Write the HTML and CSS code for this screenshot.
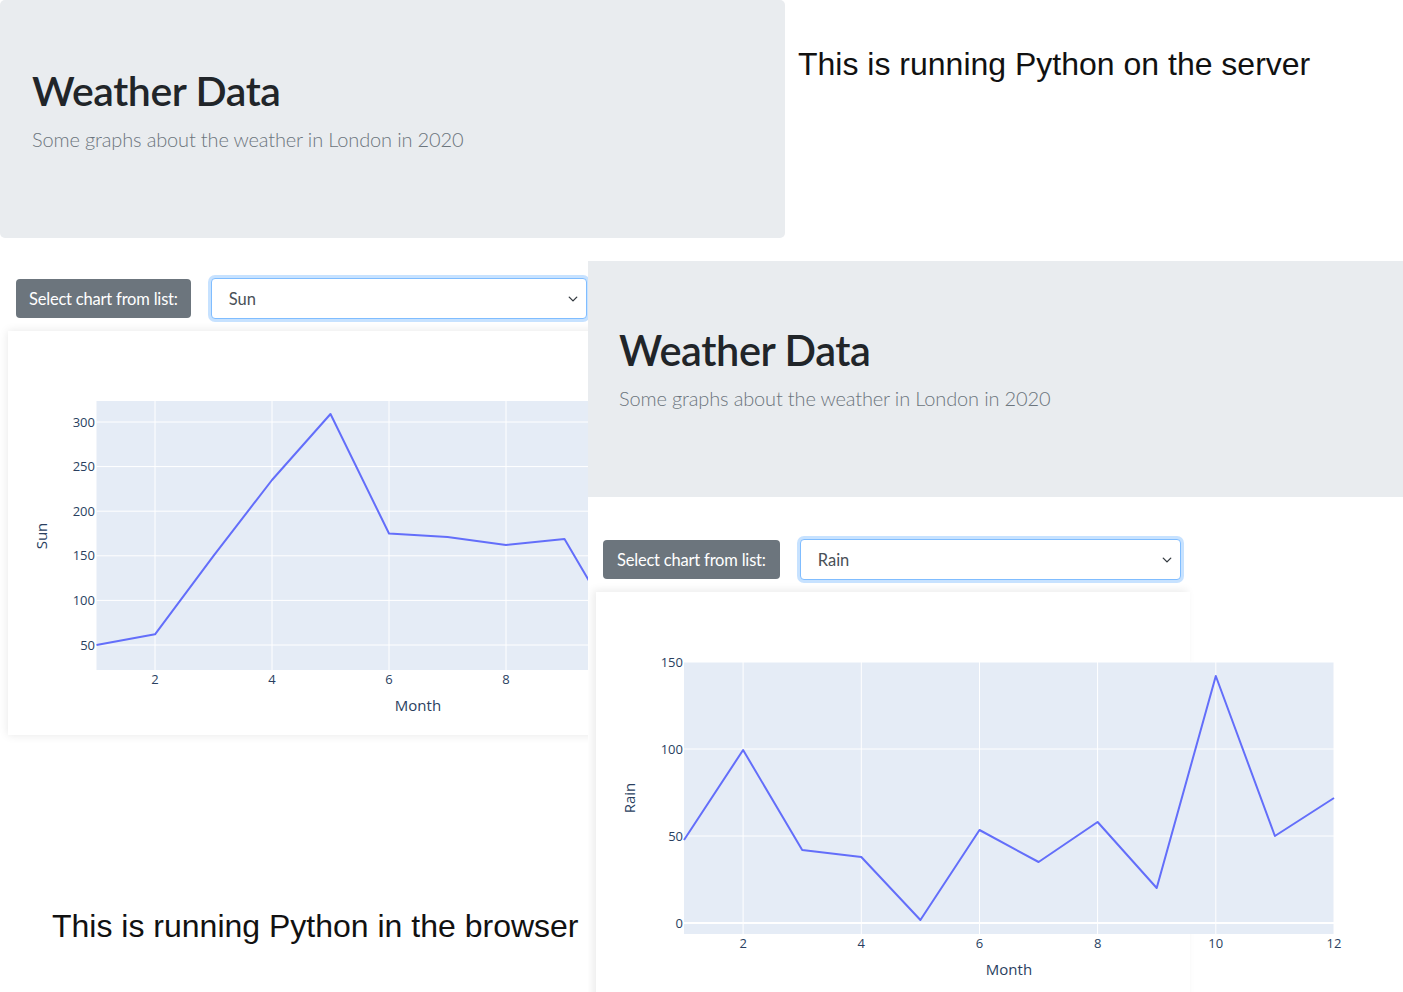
FILE: index.html
```html
<!DOCTYPE html>
<html lang="en">
<head>
<meta charset="utf-8">
<title>Weather Data – Python on the server vs in the browser</title>
<link rel="stylesheet" href="styles.css">
</head>
<body>
<div class="canvas">

  <section class="shot shot-browser">
    <div class="jumbotron">
      <h1>Weather Data</h1>
      <p class="lead">Some graphs about the weather in London in 2020</p>
    </div>
    <div class="controls">
      <span class="label">Select chart from list:</span>
      <div class="select"><span>Sun</span>
        <svg class="chev" width="10" height="10" viewBox="0 0 16 16"><path d="M2 5l6 6 6-6" fill="none" stroke="#343a40" stroke-width="2.2" stroke-linecap="round" stroke-linejoin="round"/></svg>
      </div>
    </div>
    <div class="card">
      <svg class="chart" width="760" height="404" viewBox="0 0 760 404">
        <rect x="88.5" y="70" width="660" height="269" fill="#e5ecf6"/>
        <g stroke="#fff" stroke-width="1">
          <line x1="88.5" x2="748.5" y1="314" y2="314"/>
          <line x1="88.5" x2="748.5" y1="269.4" y2="269.4"/>
          <line x1="88.5" x2="748.5" y1="224.8" y2="224.8"/>
          <line x1="88.5" x2="748.5" y1="180.2" y2="180.2"/>
          <line x1="88.5" x2="748.5" y1="135.6" y2="135.6"/>
          <line x1="88.5" x2="748.5" y1="91" y2="91"/>
          <line x1="147" x2="147" y1="70" y2="339"/>
          <line x1="264" x2="264" y1="70" y2="339"/>
          <line x1="381" x2="381" y1="70" y2="339"/>
          <line x1="498" x2="498" y1="70" y2="339"/>
          <line x1="615" x2="615" y1="70" y2="339"/>
          <line x1="732" x2="732" y1="70" y2="339"/>
        </g>
        <g class="tick" text-anchor="end">
          <text x="87" y="318.5">50</text>
          <text x="87" y="273.9">100</text>
          <text x="87" y="229.3">150</text>
          <text x="87" y="184.7">200</text>
          <text x="87" y="140.1">250</text>
          <text x="87" y="95.5">300</text>
        </g>
        <g class="tick" text-anchor="middle">
          <text x="147" y="353">2</text>
          <text x="264" y="353">4</text>
          <text x="381" y="353">6</text>
          <text x="498" y="353">8</text>
          <text x="615" y="353">10</text>
          <text x="732" y="353">12</text>
        </g>
        <polyline fill="none" stroke="#636efa" stroke-width="2" stroke-linejoin="round"
          points="88.5,314 147,303.3 205.5,224.8 264,149 322.5,83 381,202.5 439.5,206 498,214 556.5,207.9 615,307.8 673.5,322.9 732,327"/>
        <text class="axis-title" x="410" y="380" text-anchor="middle">Month</text>
        <text class="axis-title" transform="translate(39 205) rotate(-90)" text-anchor="middle">Sun</text>
      </svg>
    </div>
  </section>

  <section class="shot shot-server">
    <div class="jumbotron">
      <h1>Weather Data</h1>
      <p class="lead">Some graphs about the weather in London in 2020</p>
    </div>
    <div class="controls">
      <span class="label">Select chart from list:</span>
      <div class="select select-wide"><span>Rain</span>
        <svg class="chev" width="10" height="10" viewBox="0 0 16 16"><path d="M2 5l6 6 6-6" fill="none" stroke="#343a40" stroke-width="2.2" stroke-linecap="round" stroke-linejoin="round"/></svg>
      </div>
    </div>
    <div class="card">
      <svg class="chart" width="760" height="420" viewBox="0 0 760 420">
        <rect x="88" y="70" width="650" height="272" fill="#e5ecf6"/>
        <g stroke="#fff" stroke-width="1">
          <line x1="88" x2="738" y1="244" y2="244"/>
          <line x1="88" x2="738" y1="157" y2="157"/>
          <line x1="88" x2="738" y1="70" y2="70"/>
          <line x1="147.1" x2="147.1" y1="70" y2="342"/>
          <line x1="265.3" x2="265.3" y1="70" y2="342"/>
          <line x1="383.5" x2="383.5" y1="70" y2="342"/>
          <line x1="501.6" x2="501.6" y1="70" y2="342"/>
          <line x1="619.8" x2="619.8" y1="70" y2="342"/>
          <line x1="738" x2="738" y1="70" y2="342"/>
        </g>
        <line x1="88" x2="738" y1="331" y2="331" stroke="#fff" stroke-width="2"/>
        <g class="tick" text-anchor="end">
          <text x="87" y="335.5">0</text>
          <text x="87" y="248.5">50</text>
          <text x="87" y="161.5">100</text>
          <text x="87" y="74.5">150</text>
        </g>
        <g class="tick" text-anchor="middle">
          <text x="147.1" y="356">2</text>
          <text x="265.3" y="356">4</text>
          <text x="383.5" y="356">6</text>
          <text x="501.6" y="356">8</text>
          <text x="619.8" y="356">10</text>
          <text x="738" y="356">12</text>
        </g>
        <polyline fill="none" stroke="#636efa" stroke-width="2" stroke-linejoin="round"
          points="88,248 147.1,158 206.2,258 265.3,265 324.4,328 383.5,238 442.6,270 501.6,230 560.7,296 619.8,84 678.9,244 738,206"/>
        <text class="axis-title" x="413" y="383" text-anchor="middle">Month</text>
        <text class="axis-title" transform="translate(39 206) rotate(-90)" text-anchor="middle">Rain</text>
      </svg>
    </div>
  </section>

  <p class="caption caption-server">This is running Python on the server</p>
  <p class="caption caption-browser">This is running Python in the browser</p>
</div>
</body>
</html>
```

FILE: styles.css
```css
* { box-sizing: border-box; }

html, body {
  margin: 0;
  padding: 0;
  background: #fff;
}

.canvas {
  position: relative;
  width: 1403px;
  height: 992px;
  overflow: hidden;
  background: #fff;
  font-family: Lato, "Noto Sans", sans-serif;
  color: #212529;
}

.shot {
  position: absolute;
  background: #fff;
  display: flex;
  flex-direction: column;
  align-items: flex-start;
}

.shot > * {
  flex-shrink: 0;
}

.shot-browser {
  left: 0;
  top: 0;
  width: 785px;
  height: 735px;
}

.shot-server {
  left: 588px;
  top: 261px;
  width: 815px;
  height: 731px;
  overflow: hidden;
}

.jumbotron {
  align-self: stretch;
  height: 238px;
  background: #e9ecef;
  border-radius: 5px;
  padding: 67px 32px 0;
}

.shot-server .jumbotron {
  height: 236px;
  border-radius: 0;
  padding-top: 65px;
  padding-left: 31px;
}

.jumbotron h1 {
  margin: 0;
  font-size: 41px;
  line-height: 48px;
  font-weight: 600;
  letter-spacing: -0.4px;
  color: #212529;
}

.shot-server .jumbotron h1 {
  font-size: 41.5px;
}

.jumbotron .lead {
  margin: 9px 0 0;
  font-size: 20px;
  line-height: 30px;
  font-weight: 300;
  letter-spacing: -0.15px;
  color: #6c757d;
}

.controls {
  display: flex;
  align-items: center;
  gap: 20px;
  margin: 40px 0 0 16px;
  height: 41px;
}

.shot-server .controls {
  margin: 42px 0 0 15px;
}

.label {
  display: flex;
  align-items: center;
  height: 39px;
  padding: 0 13px;
  background: #6c757d;
  color: #fff;
  border-radius: 4px;
  font-size: 16.5px;
  letter-spacing: -0.2px;
}

.shot-server .label {
  padding: 0 14px;
}

.select {
  display: flex;
  align-items: center;
  justify-content: space-between;
  width: 376px;
  height: 41px;
  padding: 0 8px 0 17px;
  border: 1px solid #80bdff;
  border-radius: 4px;
  box-shadow: 0 0 0 3px rgba(0, 123, 255, 0.22);
  background: #fff;
  color: #495057;
  font-size: 16.5px;
}

.select-wide {
  width: 381px;
}

.chev {
  display: block;
}

.card {
  margin: 12px 0 0 8px;
  width: 594px;
  height: 404px;
  background: #fff;
  box-shadow: 0 0 9px rgba(0, 0, 0, 0.1);
  overflow: visible;
}

.shot-server .card {
  height: 420px;
  box-shadow: -3px -2px 8px rgba(0, 0, 0, 0.08);
}

.chart {
  display: block;
  overflow: visible;
}

.tick {
  font-family: "Open Sans", Verdana, sans-serif;
  font-size: 13px;
  fill: #2a3f5f;
}

.axis-title {
  font-family: "Open Sans", Verdana, sans-serif;
  font-size: 15px;
  fill: #2a3f5f;
}

.caption {
  position: absolute;
  margin: 0;
  font-family: "Liberation Sans", Arial, sans-serif;
  font-size: 32px;
  line-height: 32px;
  color: #111;
  white-space: nowrap;
}

.caption-server {
  left: 798px;
  top: 48px;
}

.caption-browser {
  left: 52px;
  top: 910px;
}
```
